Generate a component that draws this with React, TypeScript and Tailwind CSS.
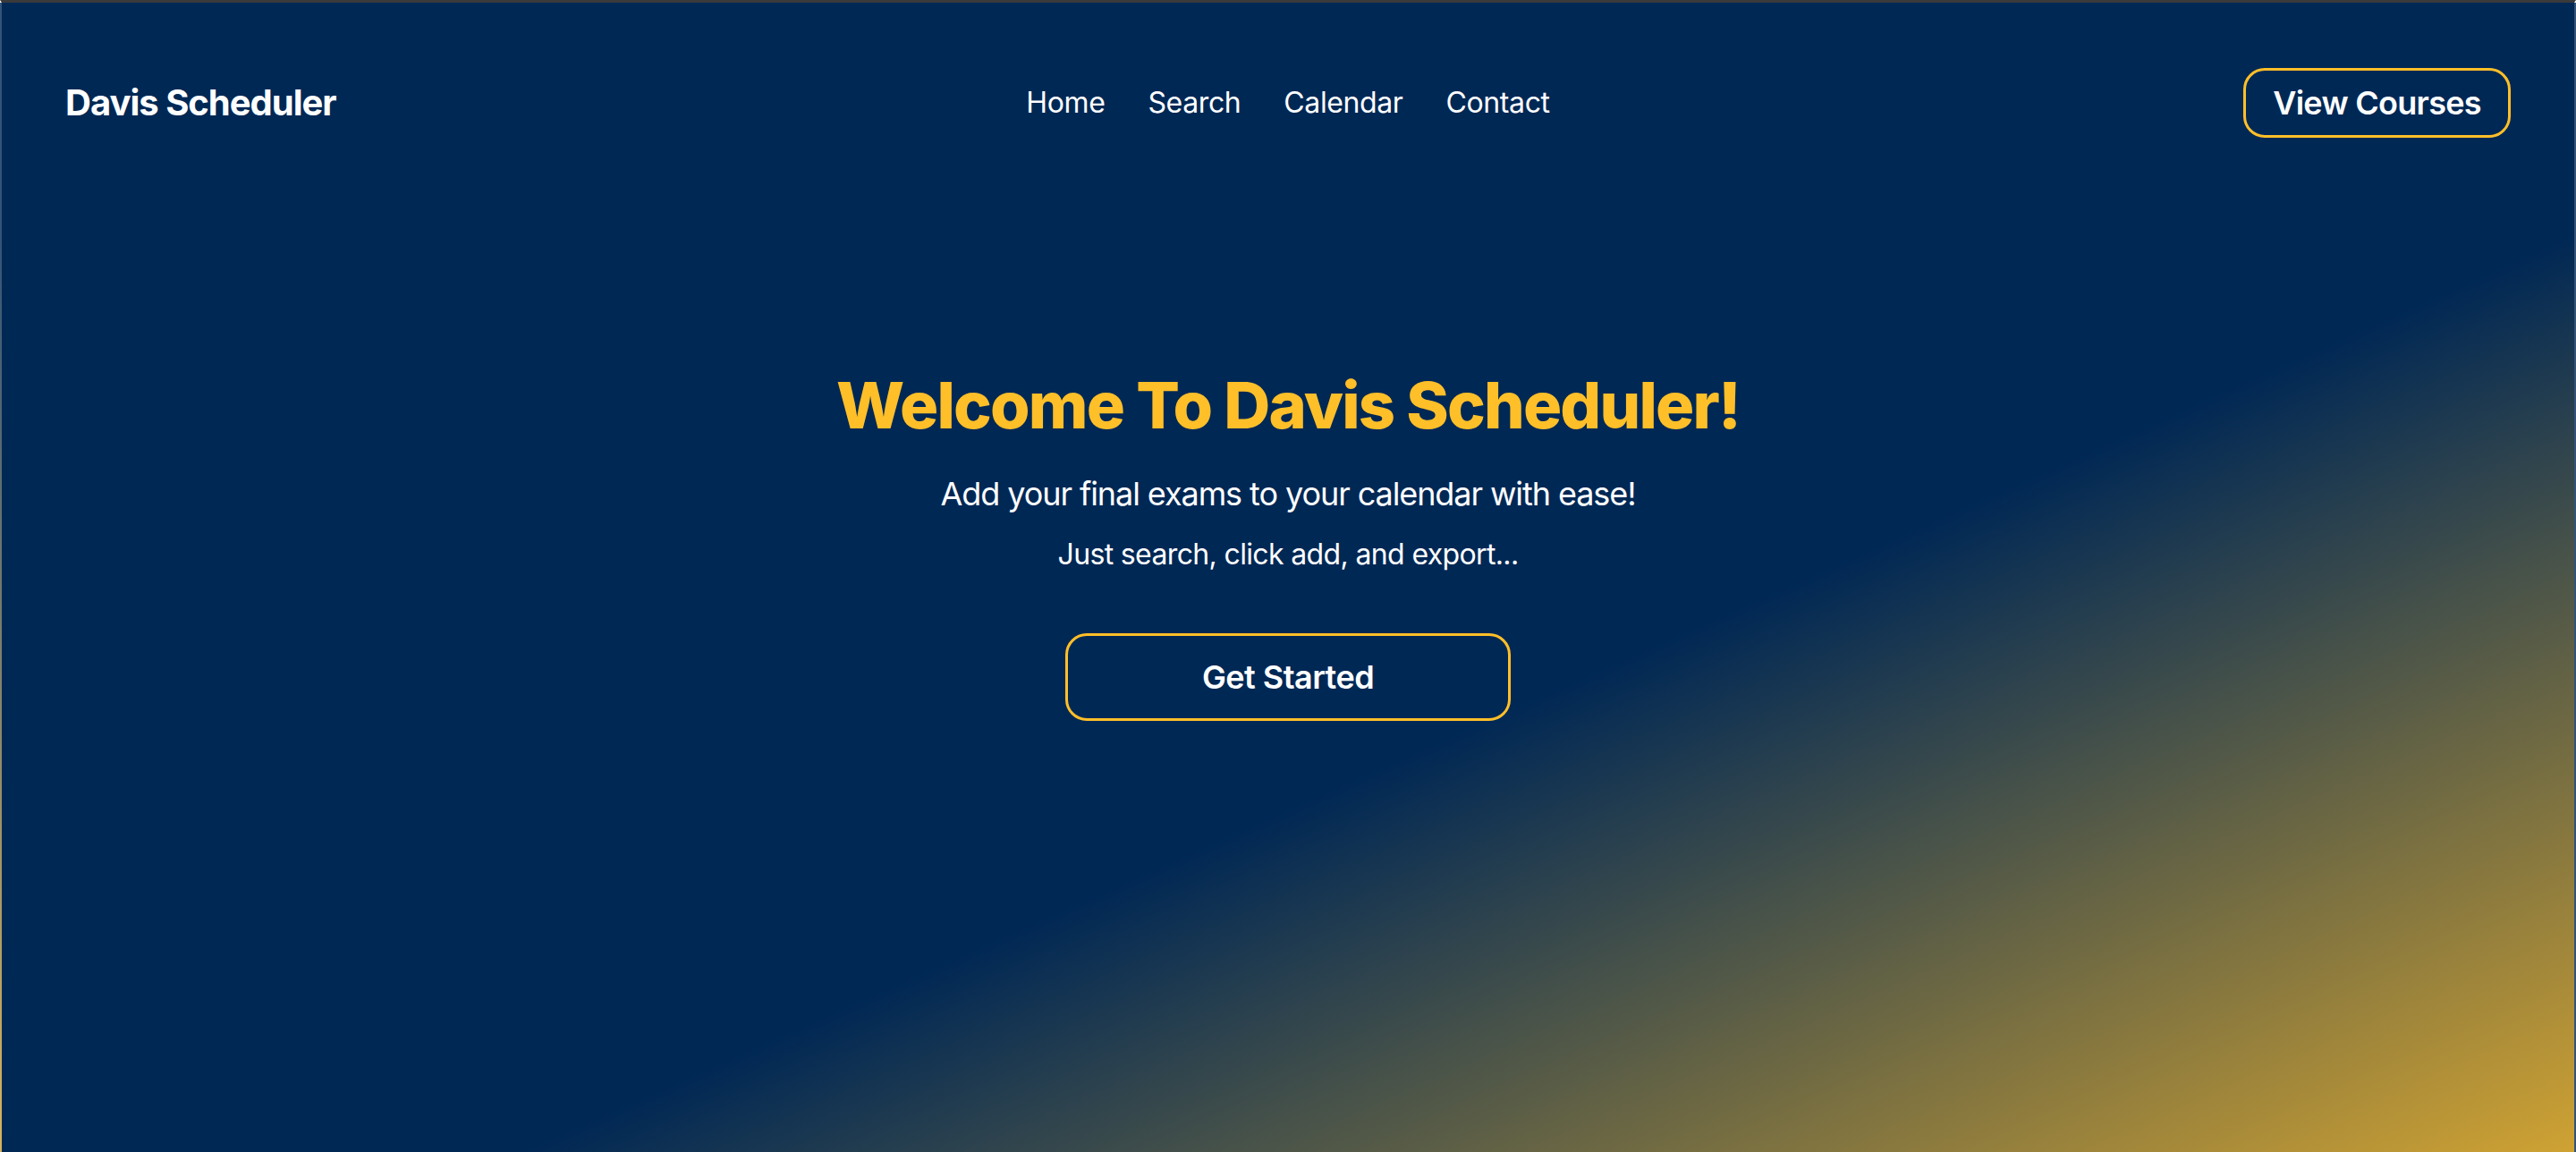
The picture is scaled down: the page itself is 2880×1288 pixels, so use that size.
import React from "react";

const navLinks = ["Home", "Search", "Calendar", "Contact"];

export default function App() {
  return (
    <div
      className="h-screen w-full overflow-hidden border-t-[3px] border-t-[#3a3a3a] border-x-2 border-x-white/20 bg-[linear-gradient(to_bottom_right,#002855_60%,#cfa233_100%)] text-white"
      style={{ fontFamily: "Inter, 'Noto Sans', sans-serif" }}
    >
      {/* Navbar */}
      <header className="grid h-[224px] grid-cols-[1fr_auto_1fr] items-center px-[71px]">
        <div className="text-[40px] font-bold tracking-[-0.025em]">Davis Scheduler</div>
        <nav className="flex items-center gap-[48px] text-[32px] tracking-[-0.012em]">
          {navLinks.map((link) => (
            <a key={link} href="#" className="hover:text-[#FFBF28] transition-colors">
              {link}
            </a>
          ))}
        </nav>
        <div className="flex justify-end">
          <button className="h-[78px] w-[299px] rounded-[24px] border-[3px] border-[#FFBF28] text-[36px] font-semibold tracking-[-0.02em]">
            View Courses
          </button>
        </div>
      </header>

      {/* Hero */}
      <main className="flex flex-col items-center pt-[186px] text-center">
        <h1 className="text-[72px] font-extrabold leading-[80px] tracking-[-0.025em] text-[#FFBF28]">
          Welcome To Davis Scheduler!
        </h1>
        <p className="mt-[31px] text-[36px] leading-[56px] tracking-[-0.03em]">
          Add your final exams to your calendar with ease!
        </p>
        <p className="mt-[16px] text-[32px] leading-[48px] tracking-[-0.02em]">Just search, click add, and export...</p>
        <button className="mt-[64px] h-[98px] w-[498px] rounded-[24px] border-[3px] border-[#FFBF28] text-[36px] font-semibold tracking-[-0.015em]">
          Get Started
        </button>
      </main>
    </div>
  );
}
